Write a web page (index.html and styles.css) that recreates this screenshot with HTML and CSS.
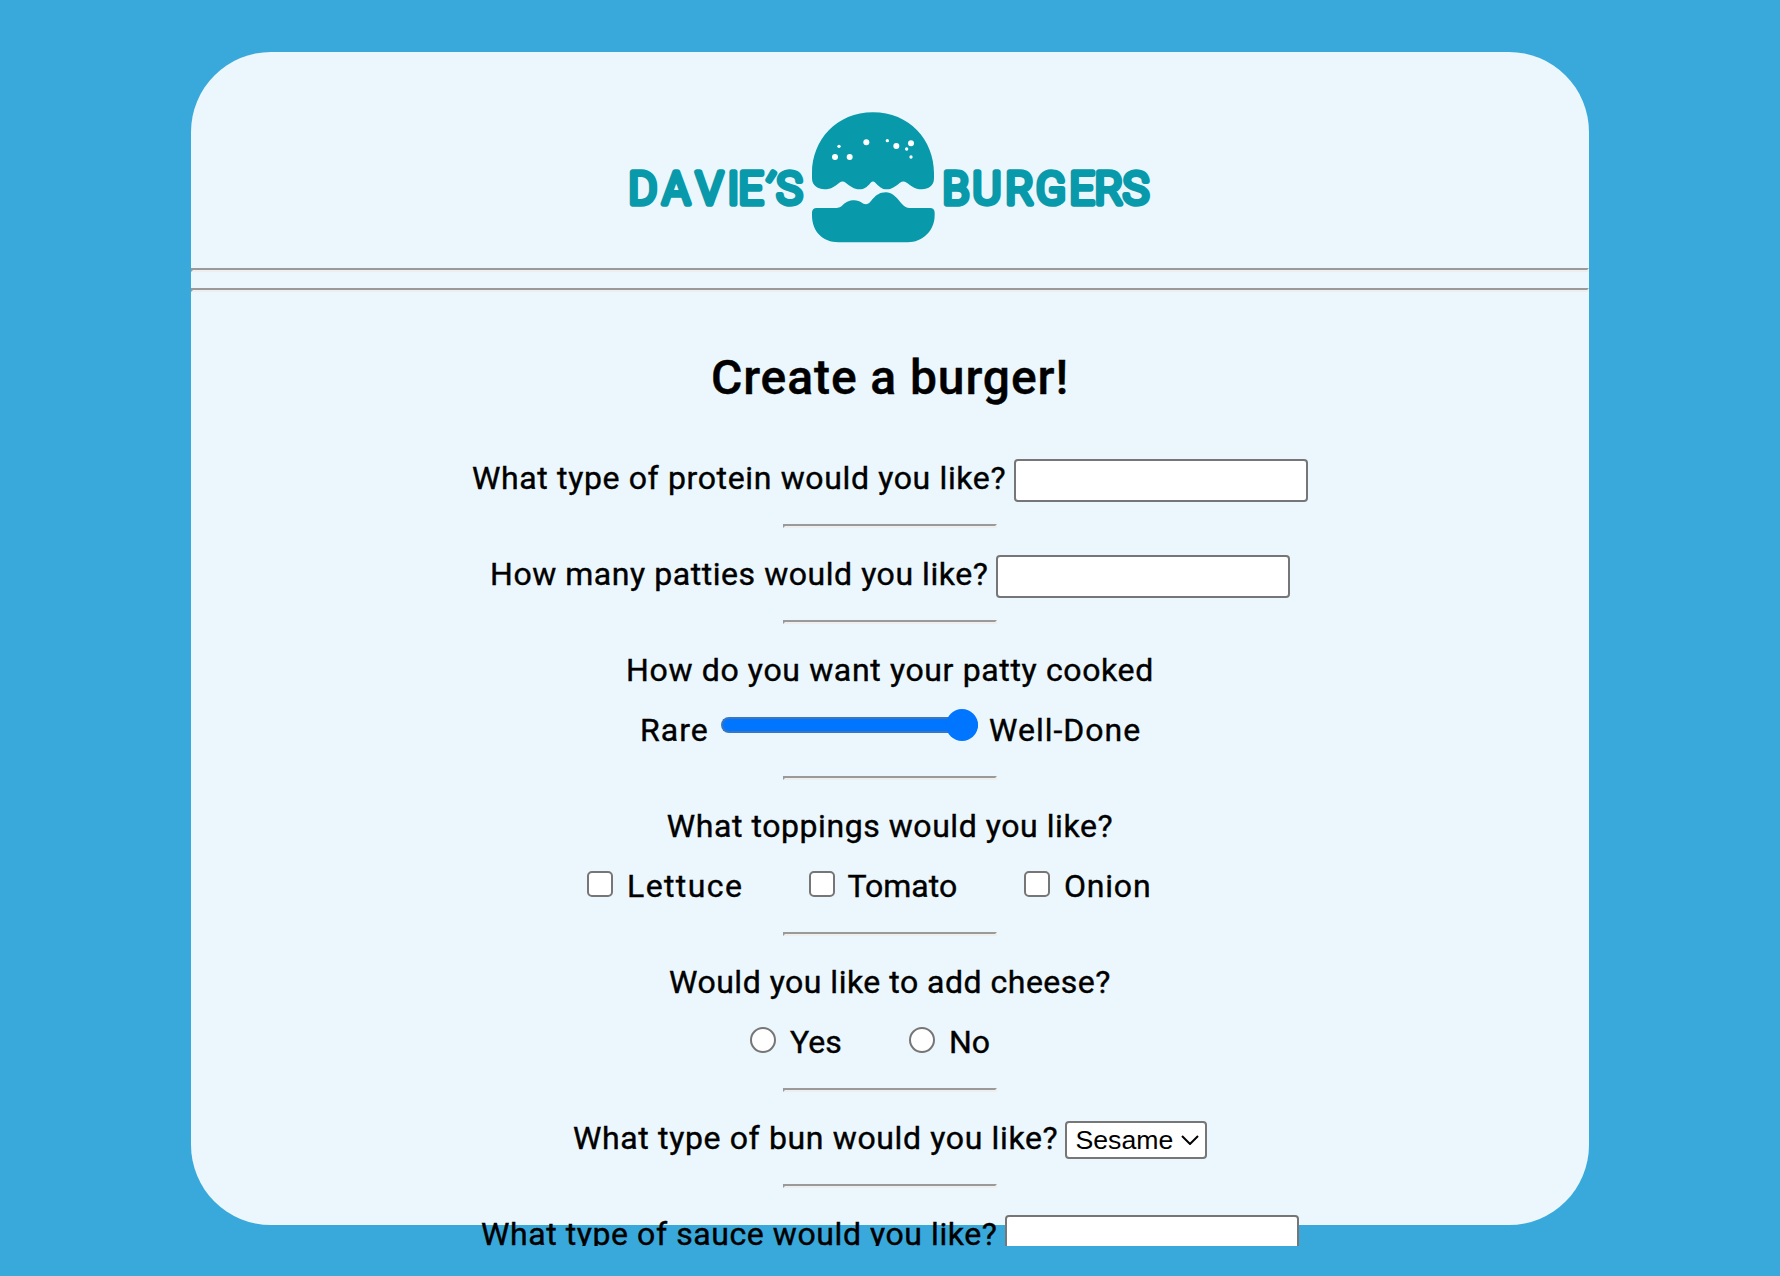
FILE: index.html
```
<!DOCTYPE html>
<html lang="en">
<head>
<meta charset="utf-8">
<title>Davie's Burgers</title>
<link rel="stylesheet" href="styles.css">
</head>
<body>
<div class="page">
<main class="card">
  <header class="header">
    <svg class="logo" viewBox="0 0 530 136" role="img" aria-label="Davie's Burgers">
      <g class="logo-text">
        <text x="3.5 37.5 71 102.5 113.5 129 151.5" y="93.8 93.8 93.8 93.8 93.8 89 93.8" rotate="0 0 0 0 0 30 0">DAVIE'S</text>
        <text x="317.5 347.5 380.5 411 444.5 469.8 498" y="93.8">BURGERS</text>
      </g>
      <g transform="translate(165 -20) scale(.33333)">
        <path d="M66 250C66 150 140 67 249 67C358 67 432 150 432 250V265C432 288 415 298 396 298C372 298 363 286 350 278Q340 271 330 278C315 290 305 298 290 298C275 298 268 290 256 278Q249 271 242 278C230 292 222 298 209 298C192 298 180 288 167 278Q158 271 148 278C135 288 125 298 103 298C85 298 66 288 66 265Z"/>
        <path d="M66 368Q66 354 80 354H140C160 354 160 331 193 331C212 331 217 343 228 343C245 343 250 307 288 307C322 307 332 354 358 354H420Q434 354 434 368V376C434 425 395 457 354 457H146C98 457 66 425 66 376Z"/>
        <g fill="#fff"><circle cx="135" cy="201" r="9"/><circle cx="179" cy="201" r="9"/><circle cx="147" cy="169" r="5"/><circle cx="229" cy="157" r="9"/><circle cx="292" cy="152" r="5"/><circle cx="319" cy="168" r="9"/><circle cx="363" cy="160" r="9"/><circle cx="350" cy="177" r="5"/><circle cx="363" cy="201" r="5"/></g>
      </g>
    </svg>
  </header>
  <hr class="rule">
  <hr class="rule rule-second">
  <h1 class="title">Create a burger!</h1>
  <form class="form">
    <div class="question"><div class="line"><label class="ask protein">What type of protein would you like?</label><input class="field" type="text"></div></div>
    <hr class="divider">
    <div class="question"><div class="line"><label class="ask patties">How many patties would you like?</label><input class="field" type="text"></div></div>
    <hr class="divider">
    <div class="question">
      <div class="line">How do you want your patty cooked</div>
      <div class="line"><label class="rare">Rare</label><input class="slider" type="range" value="100"><label class="well">Well-Done</label></div>
    </div>
    <hr class="divider">
    <div class="question">
      <div class="line toppings">What toppings would you like?</div>
      <div class="line"><label class="option lettuce"><input class="check" type="checkbox">Lettuce</label><label class="option tomato"><input class="check" type="checkbox">Tomato</label><label class="option onion"><input class="check" type="checkbox">Onion</label></div>
    </div>
    <hr class="divider">
    <div class="question">
      <div class="line cheese">Would you like to add cheese?</div>
      <div class="line"><label class="option yes"><input class="check radio" type="radio" name="cheese">Yes</label><label class="option no"><input class="check radio" type="radio" name="cheese">No</label></div>
    </div>
    <hr class="divider">
    <div class="question"><div class="line"><label class="ask bun">What type of bun would you like?</label><div class="select">Sesame<svg class="chevron" viewBox="0 0 18 10"><path d="M1 1l8 8 8-8"/></svg></div></div></div>
    <hr class="divider">
    <div class="question"><div class="line"><label class="ask sauce">What type of sauce would you like?</label><input class="field" type="text"></div></div>
  </form>
</main>
</div>
</body>
</html>
```
FILE: styles.css
```
* { box-sizing: border-box; }
body { margin: 0; height: 1276px; background: #39a9db; color: #000; font: 32px/60px Roboto, sans-serif; overflow: hidden; }
.page { height: 1246px; padding-top: 52px; overflow: hidden; }
.card { width: 1398px; height: 1173px; margin: 0 auto; background: #ebf7fc; border-radius: 80px; }
.header { display: flex; justify-content: center; padding: 58px 0 22px; }
.logo { width: 530px; height: 136px; fill: #0899aa; }
.logo-text { font: 300 43.7px Roboto, sans-serif; stroke: #0899aa; stroke-width: 5.5px; stroke-linejoin: round; stroke-linecap: round; }
hr { height: 4px; margin: 0; border: 2px solid; border-color: #9a9a9a #eee #eee #9a9a9a; }
.rule-second { margin-top: 16px; }
.title { margin: 56px 0 24px; text-align: center; font-size: 48px; font-weight: 500; line-height: 60px; letter-spacing: .9px; -webkit-text-stroke: .4px #000; }
.question { padding: 16px 0; }
.line { display: flex; justify-content: center; align-items: center; height: 60px; white-space: nowrap; letter-spacing: .64px; -webkit-text-stroke: .4px #000; }
.ask { margin-right: 8px; }
.protein { width: 534px; }
.patties { width: 498px; letter-spacing: .55px; }
.bun { width: 484px; }
.sauce { width: 516px; letter-spacing: .58px; }
.toppings { letter-spacing: .56px; }
.cheese { letter-spacing: .5px; }
.divider { width: 214px; margin: 0 auto; }
.field { width: 294px; height: 43px; margin: 5px 0 0; border: 2px solid #767676; border-radius: 4px; background: #fff; }
.rare { width: 82px; padding-left: 1px; letter-spacing: 1px; }
.well { width: 152px; margin-left: 11px; letter-spacing: 1px; }
.slider { appearance: none; width: 257px; height: 32px; margin: 0 0 10px; background: none; }
.slider::-webkit-slider-runnable-track { height: 16px; border: 2px solid #3a76c0; border-right: 0; border-radius: 8px; background: #0075ff; }
.slider::-webkit-slider-thumb { appearance: none; width: 32px; height: 32px; margin-top: -10px; border-radius: 50%; background: #0075ff; }
.option { display: flex; align-items: center; gap: 14px; }
.lettuce { width: 222px; letter-spacing: 1.4px; }
.tomato { width: 215px; gap: 12.5px; letter-spacing: 0; }
.onion { width: 169px; letter-spacing: .8px; }
.yes { width: 159px; letter-spacing: 0; }
.no { width: 121px; letter-spacing: 0; }
.check { appearance: none; flex: none; width: 26px; height: 26px; margin: 0 0 4px; border: 2px solid #767676; border-radius: 5px; background: #fff; }
.radio { border-radius: 50%; }
.select { display: flex; align-items: center; justify-content: space-between; width: 142px; height: 38px; margin-top: 4px; padding: 0 6px 0 8.5px; border: 2px solid #767676; border-radius: 4px; background: #fff; font: 26.67px/34px "Liberation Sans", Arial, sans-serif; letter-spacing: 0; -webkit-text-stroke: 0; }
.chevron { width: 18px; height: 10px; fill: none; stroke: #000; stroke-width: 2; }
```
